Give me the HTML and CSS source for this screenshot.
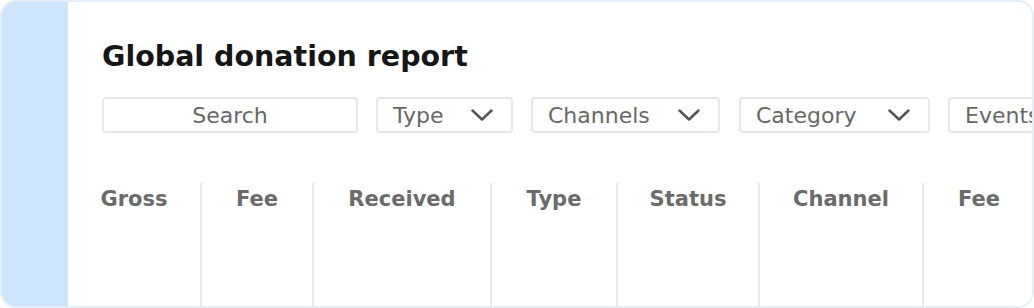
FILE: index.html
```html
<!DOCTYPE html>
<html>
<head>
    <title>Global donation report</title>
    <link rel="stylesheet" href="styles.css">
</head>
<body>
    <div class="frame">
        <div class="strip"></div>
        <div class="main">
            <h1>Global donation report</h1>
            <div class="filters">
                <div class="filter search">Search</div>
                <div class="filter f-type">Type
                    <svg width="22" height="12" viewBox="0 0 22 12"><polyline points="1.5,1.5 11,10.5 20.5,1.5" /></svg>
                </div>
                <div class="filter f-channels">Channels
                    <svg width="22" height="12" viewBox="0 0 22 12"><polyline points="1.5,1.5 11,10.5 20.5,1.5" /></svg>
                </div>
                <div class="filter f-category">Category
                    <svg width="22" height="12" viewBox="0 0 22 12"><polyline points="1.5,1.5 11,10.5 20.5,1.5" /></svg>
                </div>
                <div class="filter f-events">Events
                    <svg width="22" height="12" viewBox="0 0 22 12"><polyline points="1.5,1.5 11,10.5 20.5,1.5" /></svg>
                </div>
            </div>
            <div class="table">
                <div class="col c1">Gross</div>
                <div class="col c2">Fee</div>
                <div class="col c3">Received</div>
                <div class="col c4">Type</div>
                <div class="col c5">Status</div>
                <div class="col c6">Channel</div>
                <div class="col c7">Fee</div>
            </div>
        </div>
    </div>
</body>
</html>
```

FILE: styles.css
```css
body {
    margin: 0;
    background-color: #fff;
    font-family: 'DejaVu Sans', 'Open Sans', sans-serif;
}

.frame {
    width: 1034px;
    height: 308px;
    box-sizing: border-box;
    border: 2px solid #e4eefa;
    border-radius: 16px;
    overflow: hidden;
    display: flex;
}

.strip {
    width: 66px;
    flex: none;
    background-color: #cde6fd;
}

.main {
    flex: 1;
    min-width: 0;
    background-color: #fff;
    display: flex;
    flex-direction: column;
}

h1 {
    margin: 38px 0 0 34px;
    font-size: 28.5px;
    font-weight: 700;
    color: #161616;
    line-height: 34px;
    white-space: nowrap;
}

.filters {
    display: flex;
    gap: 18px;
    margin: 23px 0 0 34px;
    white-space: nowrap;
}

.filter {
    flex: none;
    height: 36px;
    box-sizing: border-box;
    border: 2px solid #e4e8eb;
    border-radius: 4px;
    display: flex;
    align-items: center;
    justify-content: space-between;
    padding: 0 18px 0 15px;
    font-size: 22px;
    color: #676767;
}

.filter.search {
    width: 256px;
    justify-content: center;
    padding: 0;
}

.f-type { width: 137px; }
.f-channels { width: 189px; margin-left: 0; }
.f-category { width: 191px; margin-left: 1px; }
.f-events { width: 150px; }

.filter svg {
    flex: none;
}

.filter svg polyline {
    fill: none;
    stroke: #555;
    stroke-width: 2.5;
    stroke-linecap: round;
    stroke-linejoin: round;
}

.table {
    flex: 1;
    display: flex;
    margin-top: 50px;
}

.col {
    flex: none;
    box-sizing: border-box;
    text-align: center;
    font-size: 21px;
    font-weight: 700;
    line-height: 24px;
    color: #6b6b6b;
    padding-top: 4px;
    border-right: 2px solid #e4e8eb;
}

.c1 { width: 134px; }
.c2 { width: 112px; }
.c3 { width: 178px; }
.c4 { width: 126px; }
.c5 { width: 142px; }
.c6 { width: 164px; }
.c7 { width: 110px; border-right: none; }
```
